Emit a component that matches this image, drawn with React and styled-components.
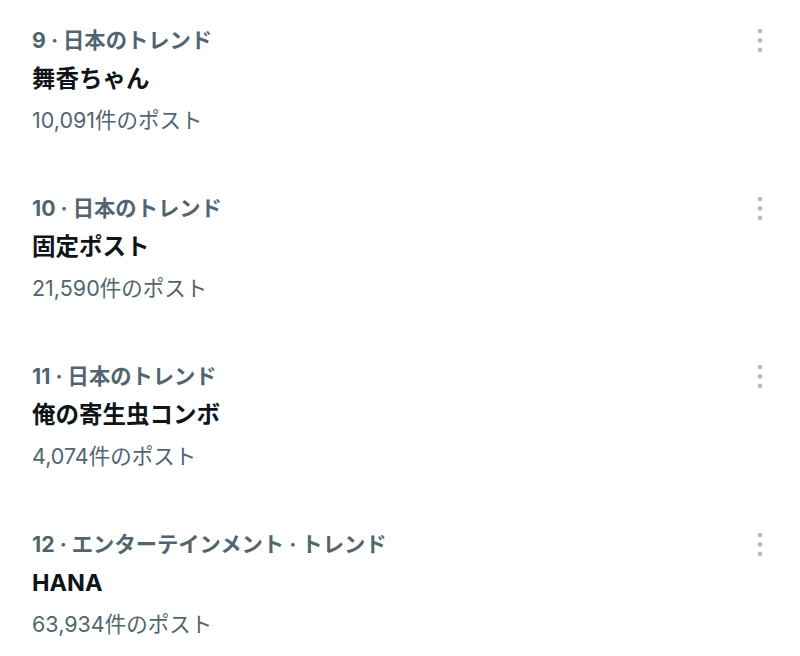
import styled, { createGlobalStyle } from "styled-components";

const Global = createGlobalStyle`
  body {
    margin: 0;
    background: #ffffff;
    font-family: "Inter", "Noto Sans CJK JP", sans-serif;
  }
`;

const List = styled.div`
  display: flex;
  flex-direction: column;
  width: 800px;
`;

const Item = styled.div`
  display: flex;
  justify-content: space-between;
  align-items: flex-start;
  padding: 26px 28px 34px 32px;
  height: 168px;
  box-sizing: border-box;
`;

const Texts = styled.div`
  display: flex;
  flex-direction: column;
`;

const Context = styled.div`
  font-size: 21.3px;
  font-weight: 700;
  line-height: 28px;
  color: #536471;
`;

const Title = styled.div`
  margin-top: 8px;
  font-size: 23.5px;
  font-weight: 700;
  line-height: 34px;
  color: #0f1419;
`;

const Count = styled.div`
  margin-top: 8px;
  font-size: 21.5px;
  font-weight: 400;
  line-height: 32px;
  color: #536471;
`;

const More = styled.button`
  display: flex;
  align-items: center;
  justify-content: center;
  width: 24px;
  height: 28px;
  padding: 0;
  border: none;
  background: none;
  color: #b4bcc3;
`;

const trends = [
  { rank: 9, context: "日本のトレンド", title: "舞香ちゃん", count: "10,091" },
  { rank: 10, context: "日本のトレンド", title: "固定ポスト", count: "21,590" },
  { rank: 11, context: "日本のトレンド", title: "俺の寄生虫コンボ", count: "4,074" },
  { rank: 12, context: "エンターテインメント · トレンド", title: "HANA", count: "63,934" },
];

function Dots() {
  return (
    <svg width="24" height="24" viewBox="0 0 24 24" fill="currentColor">
      <circle cx="12" cy="3" r="2.3" />
      <circle cx="12" cy="12.5" r="2.3" />
      <circle cx="12" cy="22" r="2.3" />
    </svg>
  );
}

export default function App() {
  return (
    <>
      <Global />
      <List>
        {trends.map((t) => (
          <Item key={t.rank}>
            <Texts>
              <Context>
                {t.rank} · {t.context}
              </Context>
              <Title>{t.title}</Title>
              <Count>{t.count}件のポスト</Count>
            </Texts>
            <More>
              <Dots />
            </More>
          </Item>
        ))}
      </List>
    </>
  );
}
